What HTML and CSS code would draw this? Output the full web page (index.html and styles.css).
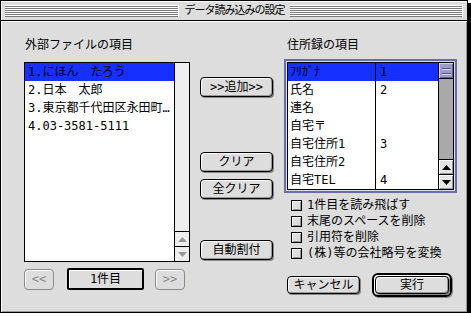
FILE: index.html
```html
<!DOCTYPE html>
<html lang="ja">
<head>
<meta charset="UTF-8">
<title>データ読み込みの設定</title>
<link rel="stylesheet" href="styles.css">
</head>
<body>

<div class="window">
  <!-- Title bar -->
  <div class="titlebar">
    <div class="stripes"></div>
    <div class="title">データ読み込みの設定</div>
    <div class="stripes"></div>
  </div>

  <div class="content">
    <!-- External file fields -->
    <div class="col-left">
      <div class="label label-left">外部ファイルの項目</div>
      <div class="list">
        <div class="list-rows">
          <div class="row selected">1.にほん　たろう</div>
          <div class="row">2.日本　太郎</div>
          <div class="row">3.東京都千代田区永田町…</div>
          <div class="row">4.03-3581-5111</div>
        </div>
        <div class="scrollbar disabled">
          <div class="track"></div>
          <div class="arrow"><svg width="9" height="5" viewBox="0 0 9 5"><polygon points="0,5 9,5 4.5,0" fill="#999"/></svg></div>
          <div class="arrow"><svg width="9" height="5" viewBox="0 0 9 5"><polygon points="0,0 9,0 4.5,5" fill="#999"/></svg></div>
        </div>
      </div>
      <div class="nav">
        <button class="btn btn-disabled nav-prev" type="button">&lt;&lt;</button>
        <button class="btn nav-count" type="button">1件目</button>
        <button class="btn btn-disabled nav-next" type="button">&gt;&gt;</button>
      </div>
    </div>

    <!-- Middle buttons -->
    <div class="col-mid">
      <button class="btn mid-btn add-btn" type="button">&gt;&gt;追加&gt;&gt;</button>
      <button class="btn mid-btn clear-btn" type="button">クリア</button>
      <button class="btn mid-btn clear-all-btn" type="button">全クリア</button>
      <button class="btn mid-btn auto-btn" type="button">自動割付</button>
    </div>

    <!-- Address book fields -->
    <div class="col-right">
      <div class="label label-right">住所録の項目</div>
      <div class="focus-ring">
        <div class="list addr-list">
          <div class="list-rows">
            <div class="addr-row selected"><span class="name">ﾌﾘｶﾞﾅ</span><span class="num">1</span></div>
            <div class="addr-row"><span class="name">氏名</span><span class="num">2</span></div>
            <div class="addr-row"><span class="name">連名</span><span class="num"></span></div>
            <div class="addr-row"><span class="name">自宅〒</span><span class="num"></span></div>
            <div class="addr-row"><span class="name">自宅住所1</span><span class="num">3</span></div>
            <div class="addr-row"><span class="name">自宅住所2</span><span class="num"></span></div>
            <div class="addr-row"><span class="name">自宅TEL</span><span class="num">4</span></div>
          </div>
          <div class="scrollbar active">
            <div class="thumb"></div>
            <div class="track"></div>
            <div class="arrow"><svg width="9" height="5" viewBox="0 0 9 5"><polygon points="0,5 9,5 4.5,0" fill="#000"/></svg></div>
            <div class="arrow"><svg width="9" height="5" viewBox="0 0 9 5"><polygon points="0,0 9,0 4.5,5" fill="#000"/></svg></div>
          </div>
        </div>
      </div>

      <div class="options">
        <label class="option"><span class="checkbox"></span>1件目を読み飛ばす</label>
        <label class="option"><span class="checkbox"></span>末尾のスペースを削除</label>
        <label class="option"><span class="checkbox"></span>引用符を削除</label>
        <label class="option"><span class="checkbox"></span>(株)等の会社略号を変換</label>
      </div>

      <div class="actions">
        <button class="btn cancel-btn" type="button">キャンセル</button>
        <div class="default-ring">
          <button class="btn ok-btn" type="button">実行</button>
        </div>
      </div>
    </div>
  </div>
</div>

</body>
</html>
```

FILE: styles.css
```css
/* Page */
body {
  margin: 0;
  background: #fff;
  font-family: "DejaVu Sans Mono", "Noto Sans CJK JP", monospace;
  font-size: 12px;
  color: #000;
}

/* Dialog window */
.window {
  width: 466px;
  height: 311px;
  border: 1px solid #000;
  background: #dddddd;
  box-shadow: 3px 3px 0 #000;
}

/* Title bar */
.titlebar {
  display: flex;
  align-items: center;
  height: 19px;
  padding: 0 4px;
  border-bottom: 1px solid #000;
  background: #dddddd;
  box-shadow: inset 1px 1px 0 #fff;
}

.stripes {
  flex: 1;
  height: 12px;
  margin-top: 1px;
  background: repeating-linear-gradient(#fff 0 1px, #7a7a7a 1px 2px);
  border-right: 1px solid #fff;
}

.title {
  padding: 0 5px 0 6px;
  font-size: 11px;
  letter-spacing: -1px;
  line-height: 19px;
}

/* Content area */
.content {
  display: flex;
  height: 291px;
  box-sizing: border-box;
  padding: 16px 0 0 23px;
  box-shadow: inset 1px 1px 0 #fff, inset -1px -1px 0 #999;
}

.label {
  height: 16px;
  line-height: 16px;
}

.label-left {
  padding-left: 1px;
}

.label-right {
  padding-left: 3px;
}

.col-left {
  width: 166px;
}

.col-mid {
  display: flex;
  flex-direction: column;
  width: 74px;
  margin-left: 10px;
}

.col-right {
  width: 173px;
  margin-left: 10px;
}

/* Lists */
.list {
  display: flex;
  box-sizing: border-box;
  height: 200px;
  margin-top: 9px;
  border: 1px solid #000;
  background: #fff;
}

.list-rows {
  flex: 1;
  overflow: hidden;
}

.row {
  height: 18px;
  line-height: 18px;
  padding-left: 3px;
  white-space: nowrap;
}

.selected {
  background: #1530ff;
}

/* Scroll bars */
.scrollbar {
  display: flex;
  flex-direction: column;
  width: 14px;
  border-left: 1px solid #000;
}

.scrollbar .track {
  flex: 1;
}

.scrollbar.disabled .track {
  background: #eeeeee;
}

.scrollbar.active .track {
  background: #a9a9a9;
  border-top: 1px solid #000;
}

.arrow {
  display: flex;
  align-items: center;
  justify-content: center;
  height: 14px;
  border-top: 1px solid #000;
  background: #eeeeee;
}

.scrollbar.active .arrow {
  background: #e4e4e4;
  box-shadow: inset 1px 1px 0 #fff, inset -1px -1px 0 #999;
}

.thumb {
  height: 15px;
  background: #9c9ccc repeating-linear-gradient(#9c9ccc 0 3px, #55558a 3px 4px, #d8d8f0 4px 5px) no-repeat center / 9px 11px;
  box-shadow: inset 1px 1px 0 #d4d4ee, inset -1px -1px 0 #66669a;
}

/* Address list with focus ring */
.focus-ring {
  margin-top: 6px;
  padding: 1px;
  border: 2px solid #6c6ca8;
}

.addr-list {
  height: 128px;
  margin-top: 0;
}

.addr-row {
  display: flex;
  height: 18px;
  line-height: 18px;
}

.addr-row .name {
  width: 85px;
  padding-left: 2px;
  white-space: nowrap;
}

.addr-row .num {
  flex: 1;
  padding-left: 4px;
  border-left: 1px solid #000;
}

/* Buttons */
.btn {
  box-sizing: border-box;
  height: 20px;
  padding: 0;
  font-family: inherit;
  font-size: 12px;
  line-height: 16px;
  color: #000;
  background: #dddddd;
  border: 1px solid #000;
  border-radius: 4px;
  box-shadow: inset 1px 1px 0 #fff, inset -1px -1px 0 #999, 1px 1px 0 #888;
}

.btn-disabled {
  color: #8a8a8a;
  border-color: #8a8a8a;
  box-shadow: inset 1px 1px 0 #fff;
}

.nav {
  display: flex;
  align-items: center;
  margin-top: 6px;
}

.nav-prev,
.nav-next {
  width: 30px;
  height: 21px;
}

.nav-count {
  width: 77px;
  height: 22px;
  margin: 0 11px 0 13px;
  border-width: 2px;
  border-radius: 2px;
  box-shadow: inset 1px 1px 0 #fff;
}

.mid-btn {
  width: 73px;
}

.add-btn {
  margin-top: 40px;
}

.clear-btn {
  margin-top: 55px;
}

.clear-all-btn {
  margin-top: 7px;
}

.auto-btn {
  margin-top: 41px;
}

/* Options */
.options {
  margin-top: 4px;
  padding-left: 7px;
}

.option {
  display: flex;
  align-items: center;
  height: 16px;
  line-height: 16px;
}

.checkbox {
  box-sizing: border-box;
  width: 11px;
  height: 11px;
  margin-right: 5px;
  border: 1px solid #000;
  background: #dddddd;
  box-shadow: inset 1px 1px 0 #fff, inset -1px -1px 0 #999;
}

/* Bottom actions */
.actions {
  display: flex;
  align-items: center;
  margin-top: 12px;
  padding-left: 3px;
}

.cancel-btn {
  width: 73px;
  height: 18px;
}

.default-ring {
  margin-left: 12px;
  padding: 1px;
  border: 2px solid #000;
  border-radius: 6px;
  box-shadow: inset 1px 1px 0 #fff, 1px 1px 0 #888;
}

.ok-btn {
  display: block;
  width: 74px;
  height: 18px;
}
```
